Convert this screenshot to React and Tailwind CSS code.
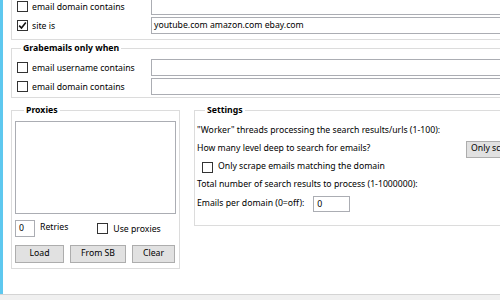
import React from "react";

const font = { fontFamily: '"Noto Sans", "Open Sans", sans-serif' };

function Box({ checked }) {
  return (
    <span className="w-[11px] h-[11px] border border-[#333333] bg-white flex items-center justify-center shrink-0">
      {checked && (
        <svg width="9" height="9" viewBox="0 0 9 9">
          <path d="M1.2 4.6 L3.5 7 L7.8 1.6" fill="none" stroke="#111" strokeWidth="1.6" />
        </svg>
      )}
    </span>
  );
}

function Row({ label, checked, value, cls }) {
  return (
    <div className={"flex items-center h-[17px] " + (cls || "")}>
      <div className="w-[139px] flex items-center pl-[5px] shrink-0">
        <Box checked={checked} />
        <span className="ml-[4px] text-[8.7px] leading-[14px] text-black whitespace-nowrap">{label}</span>
      </div>
      <div className="flex-1 h-[17px] border border-[#abadb3] bg-white text-[8.7px] leading-[15px] pl-[2px] text-black whitespace-nowrap overflow-hidden">
        {value}
      </div>
    </div>
  );
}

function Btn({ children, w }) {
  return (
    <div className={"h-[18px] border border-[#adadad] bg-[#e1e1e1] flex items-center justify-center text-[8.7px] text-black shrink-0 " + w}>
      {children}
    </div>
  );
}

export default function App() {
  return (
    <div className="w-[500px] h-[300px] bg-white flex overflow-hidden relative text-black" style={font}>
      <div className="w-[3px] h-full bg-[#5ec8ef] shrink-0" />
      <div className="flex-1 flex flex-col pl-[8px] min-w-0">
        {/* top group (continues above) */}
        <div className="mt-[-21px] h-[61px] w-[520px] border border-[#dcdcdc] shrink-0 flex flex-col pt-[18px]">
          <Row label="email domain contains" />
          <Row label="site is" checked value="youtube.com amazon.com ebay.com" cls="mt-[2px]" />
        </div>

        {/* Grabemails */}
        <fieldset className="mt-[1px] w-[520px] border border-[#dcdcdc] shrink-0 pb-[2px]">
          <legend className="ml-[9px] px-[2px] text-[8.7px] leading-[14px] font-bold">Grabemails only when</legend>
          <Row label="email username contains" cls="mt-[4px]" />
          <Row label="email domain contains" cls="mt-[2px]" />
        </fieldset>

        <div className="flex items-start mt-[5px]">
          {/* Proxies */}
          <fieldset className="w-[169px] shrink-0 border border-[#dcdcdc] px-[3px] pb-[5px]">
            <legend className="ml-[9px] px-[2px] text-[8.7px] leading-[14px] font-bold">Proxies</legend>
            <div className="mt-[4px] h-[93px] border border-[#abadb3] bg-white" />
            <div className="mt-[6px] flex items-center h-[17px] whitespace-nowrap">
              <div className="w-[20px] h-[17px] border border-[#abadb3] text-[8.7px] leading-[15px] pl-[3px]">0</div>
              <span className="ml-[5px] text-[8.7px] leading-[14px] -mt-[3px]">Retries</span>
              <span className="ml-[29px]"><Box /></span>
              <span className="ml-[5px] text-[8.7px] leading-[14px]">Use proxies</span>
            </div>
            <div className="mt-[8px] flex gap-[6px]">
              <Btn w="w-[49px]">Load</Btn>
              <Btn w="w-[56px]">From SB</Btn>
              <Btn w="w-[43px]">Clear</Btn>
            </div>
          </fieldset>

          {/* Settings */}
          <fieldset className="ml-[14px] w-[340px] shrink-0 border border-[#dcdcdc] pl-[2px] pb-[12px]">
            <legend className="ml-[8px] px-[2px] text-[8.7px] leading-[14px] font-bold">Settings</legend>
            <div className="mt-[5px] h-[18px] flex items-center text-[8.7px] whitespace-nowrap">"Worker" threads processing the search results/urls (1-100):</div>
            <div className="h-[18px] flex items-center text-[8.7px] whitespace-nowrap">
              <span className="w-[269px] shrink-0">How many level deep to search for emails?</span>
              <div className="h-[17px] w-[80px] shrink-0 border border-[#adadad] bg-[#e1e1e1] flex items-center pl-[4px] text-[8.7px] whitespace-nowrap overflow-hidden">Only scrape</div>
            </div>
            <div className="h-[18px] flex items-center text-[8.7px] whitespace-nowrap pl-[5px]">
              <Box />
              <span className="ml-[5px]">Only scrape emails matching the domain</span>
            </div>
            <div className="h-[18px] flex items-center text-[8.7px] whitespace-nowrap">Total number of search results to process (1-1000000):</div>
            <div className="mt-[1px] h-[18px] flex items-center text-[8.7px] whitespace-nowrap">
              <span>Emails per domain (0=off):</span>
              <div className="ml-[9px] w-[37px] h-[16px] border border-[#abadb3] text-[8.7px] leading-[14px] pl-[3px]">0</div>
            </div>
          </fieldset>
        </div>

        <div className="flex-1" />
      </div>
      <div className="absolute left-0 right-0 bottom-0 h-[6px] bg-[#f0f0f0] border-t border-[#d4d4d4]" />
    </div>
  );
}
